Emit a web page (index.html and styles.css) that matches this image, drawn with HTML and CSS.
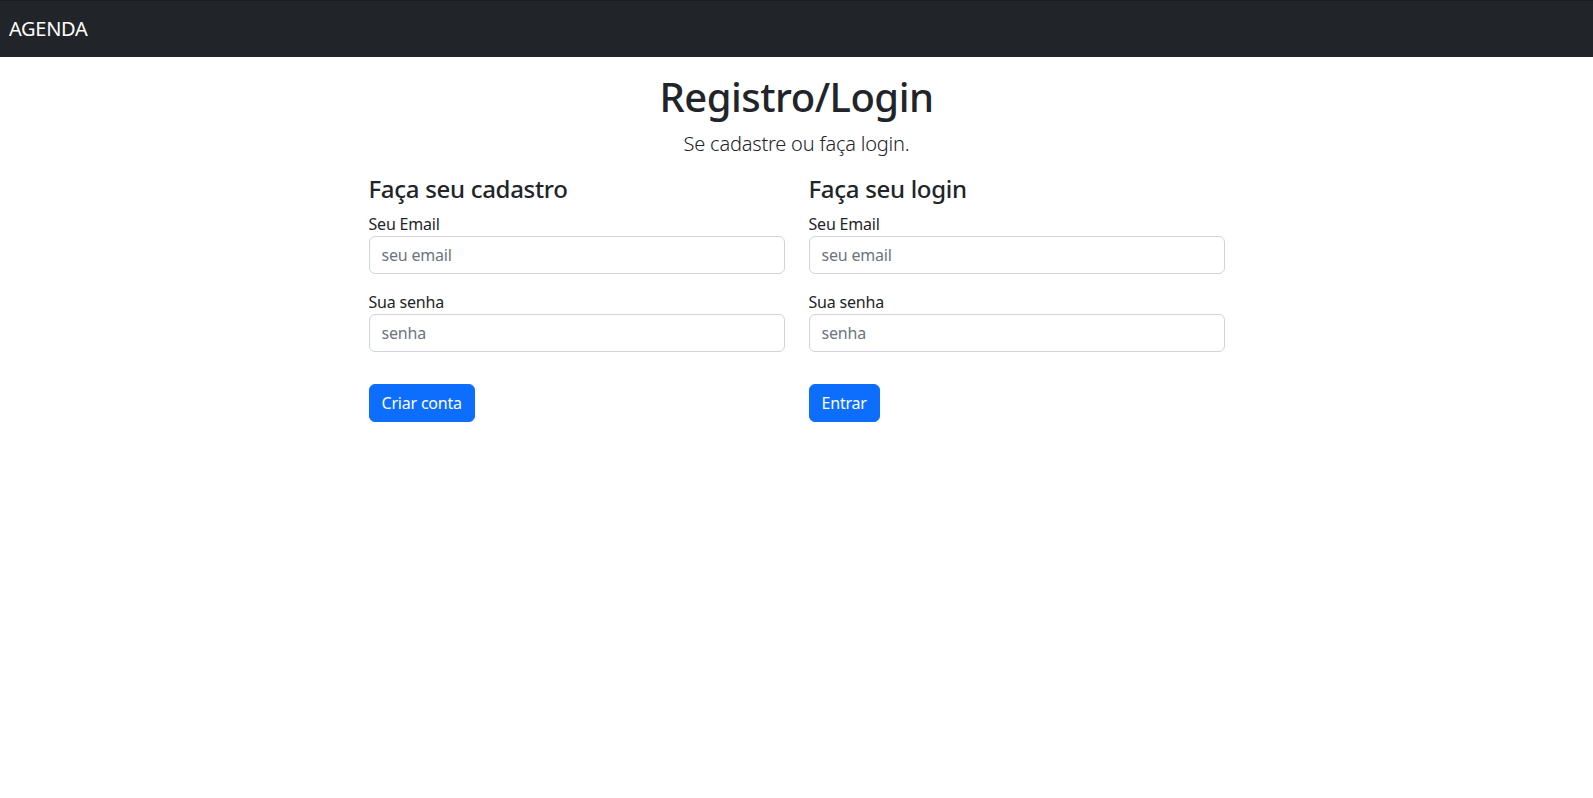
FILE: index.html
```html
<!DOCTYPE html>
<html lang="pt-BR">
<head>
<meta charset="utf-8">
<title>Agenda</title>
<link rel="stylesheet" href="styles.css">
</head>
<body>
<nav class="navbar">
  <a class="brand" href="#">AGENDA</a>
</nav>
<main class="container">
  <h1 class="title">Registro/Login</h1>
  <p class="lead">Se cadastre ou faça login.</p>
  <div class="forms">
    <form class="form">
      <h4 class="form-title">Faça seu cadastro</h4>
      <label class="label">Seu Email</label>
      <input class="input" type="email" placeholder="seu email">
      <label class="label">Sua senha</label>
      <input class="input" type="password" placeholder="senha">
      <div class="actions"><button class="btn" type="button">Criar conta</button></div>
    </form>
    <form class="form">
      <h4 class="form-title">Faça seu login</h4>
      <label class="label">Seu Email</label>
      <input class="input" type="email" placeholder="seu email">
      <label class="label">Sua senha</label>
      <input class="input" type="password" placeholder="senha">
      <div class="actions"><button class="btn" type="button">Entrar</button></div>
    </form>
  </div>
</main>
</body>
</html>
```
FILE: styles.css
```css
* { box-sizing: border-box; }
body {
  margin: 0;
  font-family: "Noto Sans", "Open Sans", sans-serif;
  font-size: 16px;
  line-height: 1.5;
  color: #212529;
  background: #fff;
}
.navbar {
  height: 57px;
  border-top: 1px solid #1a1d20;
  background: #212529;
  display: flex;
  align-items: center;
  padding: 0 9px;
}
.brand {
  color: #fff;
  text-decoration: none;
  font-size: 20px;
  line-height: 30px;
  letter-spacing: -0.3px;
}
.container {
  width: 1320px;
  margin: 16px auto 0;
  padding: 0 12px;
}
.title {
  margin: 0 0 8px;
  text-align: center;
  font-size: 40px;
  font-weight: 500;
  line-height: 48px;
  letter-spacing: -0.5px;
}
.lead {
  margin: 0 0 16px;
  text-align: center;
  font-size: 20px;
  font-weight: 300;
  line-height: 30px;
  letter-spacing: -0.2px;
}
.forms {
  width: 856px;
  margin: 0 auto;
  display: grid;
  grid-template-columns: 1fr 1fr;
  column-gap: 24px;
}
.form { margin: 0; }
.form-title {
  margin: 0 0 8px;
  font-size: 24px;
  font-weight: 500;
  line-height: 28.8px;
  letter-spacing: -0.3px;
}
.label {
  display: block;
  font-size: 16px;
  line-height: 24px;
  letter-spacing: -0.2px;
}
.input {
  display: block;
  width: 100%;
  height: 38px;
  margin: 0 0 16px;
  padding: 6px 12px;
  font: inherit;
  font-size: 16px;
  color: #212529;
  background: #fff;
  border: 1px solid #ced4da;
  border-radius: 6px;
  outline: none;
}
.input::placeholder { color: #6c757d; opacity: 1; letter-spacing: -0.2px; }
.actions { margin-top: 32px; }
.btn {
  height: 38px;
  padding: 6px 12px;
  font: inherit;
  font-size: 16px;
  letter-spacing: -0.2px;
  color: #fff;
  background: #0d6efd;
  border: 1px solid #0d6efd;
  border-radius: 6px;
  cursor: pointer;
}
```
